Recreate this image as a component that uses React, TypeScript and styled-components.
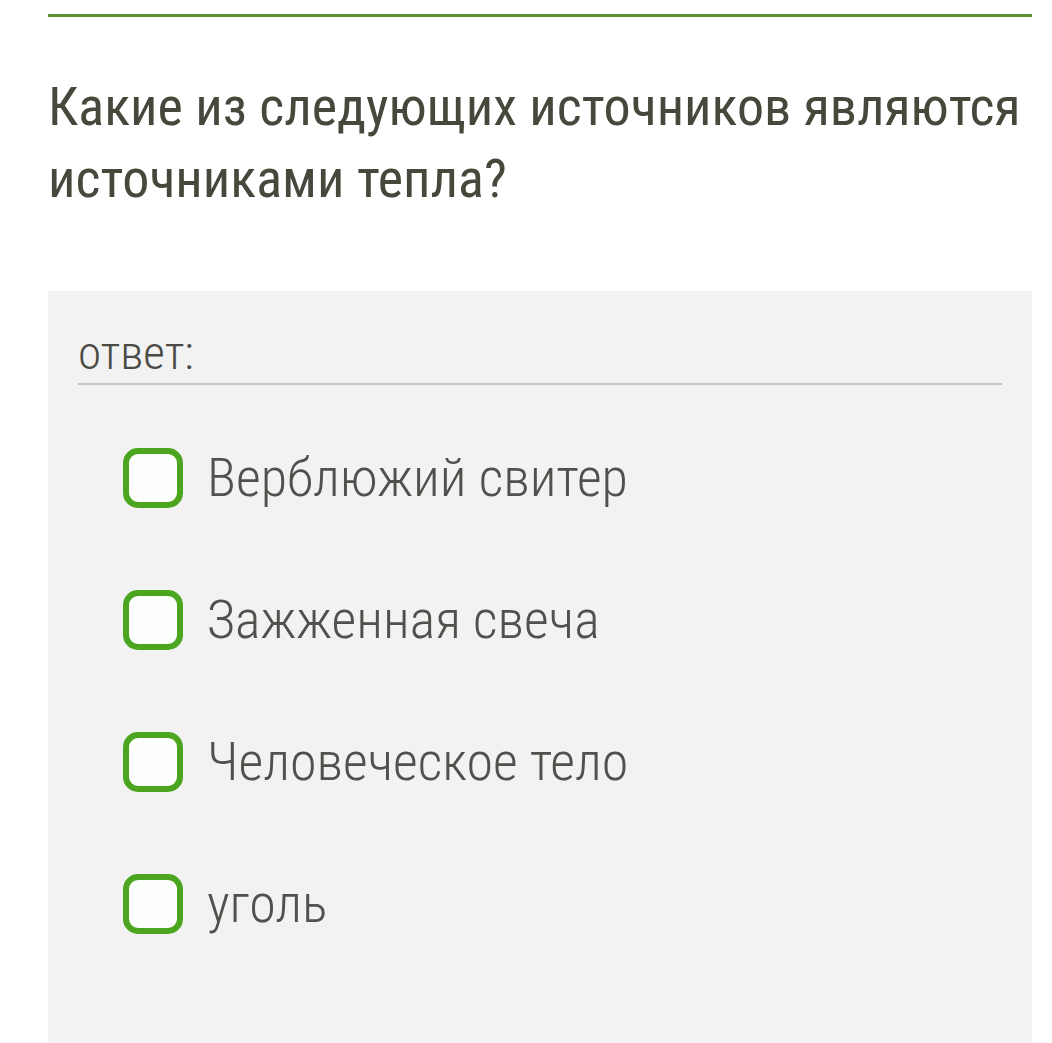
import React from "react";
import styled, { createGlobalStyle } from "styled-components";

const GlobalStyle = createGlobalStyle`
  html, body {
    margin: 0;
    padding: 0;
    background: #ffffff;
  }
  body {
    font-family: "Roboto Condensed", Roboto, "Liberation Sans", sans-serif;
    font-stretch: condensed;
  }
`;

const Page = styled.main`
  box-sizing: border-box;
  min-height: 1043px;
  padding: 14px 20px 0 48px;
  display: flex;
  flex-direction: column;
`;

const TopRule = styled.hr`
  margin: 0;
  border: 0;
  height: 3px;
  background: #5b8f35;
`;

const Question = styled.h1`
  margin: 54px 0 0;
  font-family: "Roboto Condensed", Roboto, sans-serif;
  font-stretch: condensed;
  font-weight: 400;
  font-size: 54px;
  line-height: 72px;
  color: #48473b;
`;

const Panel = styled.section`
  flex: 1;
  margin-top: 76px;
  background: #f2f2f2;
  padding: 36px 30px 60px;
`;

const AnswerLabel = styled.div`
  font-family: "Roboto Condensed", Roboto, sans-serif;
  font-stretch: condensed;
  font-weight: 300;
  font-size: 47px;
  line-height: 52px;
  color: #4a4a44;
  padding-bottom: 4px;
  border-bottom: 2px solid #c6c6c6;
`;

const Options = styled.ul`
  list-style: none;
  margin: 63px 0 0;
  padding: 0 0 0 45px;
  display: flex;
  flex-direction: column;
  gap: 82px;
`;

const Option = styled.li`
  display: flex;
  align-items: center;
  gap: 24px;
  height: 60px;
`;

const Box = styled.span`
  box-sizing: border-box;
  flex: none;
  width: 60px;
  height: 60px;
  border: 6px solid #4ca51f;
  border-radius: 15px;
  background: #fdfffc;
`;

const OptionText = styled.span`
  font-family: "Roboto Condensed", Roboto, sans-serif;
  font-stretch: condensed;
  font-weight: 300;
  font-size: 54px;
  line-height: 60px;
  color: #50504c;
  white-space: nowrap;
`;

const options = [
  "Верблюжий свитер",
  "Зажженная свеча",
  "Человеческое тело",
  "уголь",
];

export default function App() {
  return (
    <>
      <GlobalStyle />
      <Page>
        <TopRule />
        <Question>
          Какие из следующих источников являются источниками тепла?
        </Question>
        <Panel>
          <AnswerLabel>ответ:</AnswerLabel>
          <Options>
            {options.map((o) => (
              <Option key={o}>
                <Box role="checkbox" aria-checked="false" />
                <OptionText>{o}</OptionText>
              </Option>
            ))}
          </Options>
        </Panel>
      </Page>
    </>
  );
}
